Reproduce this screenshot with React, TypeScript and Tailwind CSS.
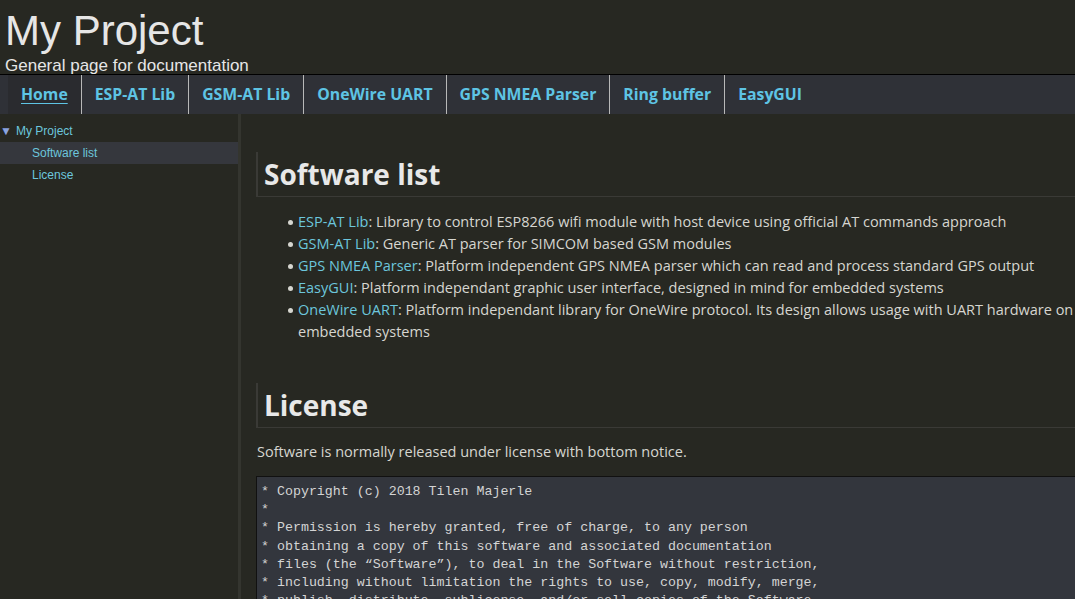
const tabs = ["Home", "ESP-AT Lib", "GSM-AT Lib", "OneWire UART", "GPS NMEA Parser", "Ring buffer", "EasyGUI"];

const software = [
  { name: "ESP-AT Lib", text: "Library to control ESP8266 wifi module with host device using official AT commands approach" },
  { name: "GSM-AT Lib", text: "Generic AT parser for SIMCOM based GSM modules" },
  { name: "GPS NMEA Parser", text: "Platform independent GPS NMEA parser which can read and process standard GPS output" },
  { name: "EasyGUI", text: "Platform independant graphic user interface, designed in mind for embedded systems" },
  { name: "OneWire UART", text: "Platform independant library for OneWire protocol. Its design allows usage with UART hardware on embedded systems" },
];

const license = [
  "* Copyright (c) 2018 Tilen Majerle",
  "*",
  "* Permission is hereby granted, free of charge, to any person",
  "* obtaining a copy of this software and associated documentation",
  "* files (the \u201cSoftware\u201d), to deal in the Software without restriction,",
  "* including without limitation the rights to use, copy, modify, merge,",
  "* publish, distribute, sublicense, and/or sell copies of the Software,",
  "* and to permit persons to whom the Software is furnished to do so,",
];

function Heading({ children }: { children: React.ReactNode }) {
  return (
    <h1 className="border-b border-l-2 border-[#3a3a36] py-[6px] pl-[6px] text-[28px] font-bold leading-[32px] text-[#e8e8e8]">
      {children}
    </h1>
  );
}

export default function App() {
  return (
    <div className="flex h-[599px] w-[1075px] flex-col overflow-hidden bg-[#272822] font-['Open_Sans',sans-serif] text-[#d6d6d0]">
      <header className="h-[74px] pl-[5px] font-['Liberation_Sans',sans-serif] text-[#e6e6e6]">
        <div className="pt-[6px] text-[42px] leading-[50px]">My Project</div>
        <div className="text-[17px] leading-[20px]">General page for documentation</div>
      </header>

      <nav className="flex h-[40px] border-t border-black bg-[#2f3137] pl-[8px]">
        {tabs.map((t, i) => (
          <a
            key={t}
            className={`flex items-center px-[13px] text-[15.8px] font-bold text-[#5ec4e4] ${i < tabs.length - 1 ? "border-r border-[#b8b8b8]" : ""} ${i === 0 ? "bg-[#2a2b2f] underline underline-offset-[3px]" : ""}`}
          >
            {t}
          </a>
        ))}
      </nav>

      <div className="flex min-h-0 flex-1">
        <aside className="w-[241px] shrink-0 border-r-[3px] border-[#34352f] pt-[6px] font-['Liberation_Sans',sans-serif] text-[12px] text-[#6cc6dc]">
          <div className="flex h-[22px] items-center">
            <span className="w-[16px] text-[12px] text-[#8aa4e0]">▼</span>
            <span>My Project</span>
          </div>
          <div className="flex h-[22px] items-center bg-[#35373d] pl-[32px]">Software list</div>
          <div className="flex h-[22px] items-center pl-[32px]">License</div>
        </aside>

        <main className="w-[860px] shrink-0 pl-[15px] pt-[38px]">
          <Heading>Software list</Heading>
          <ul className="mt-[14px] w-[820px] pl-[42px] text-[14.5px] leading-[22px]">
            {software.map((s) => (
              <li key={s.name} className="relative">
                <span className="absolute left-[-10px] top-[9px] h-[5px] w-[5px] rounded-full bg-[#d6d6d0]" />
                <a className="text-[#6cc6dc]">{s.name}</a>: {s.text}
              </li>
            ))}
          </ul>

          <div className="mt-[40px]">
            <Heading>License</Heading>
          </div>
          <p className="mt-[13px] pl-[1px] text-[14.5px] leading-[22px]">Software is normally released under license with bottom notice.</p>

          <pre className="mt-[13px] border-l border-t border-[#111] bg-[#33363d] px-[4px] pt-[6px] font-['Liberation_Mono',monospace] text-[13.3px] leading-[18.2px] text-[#d4d4d4]">
            {license.join("\n")}
          </pre>
        </main>
      </div>
    </div>
  );
}
